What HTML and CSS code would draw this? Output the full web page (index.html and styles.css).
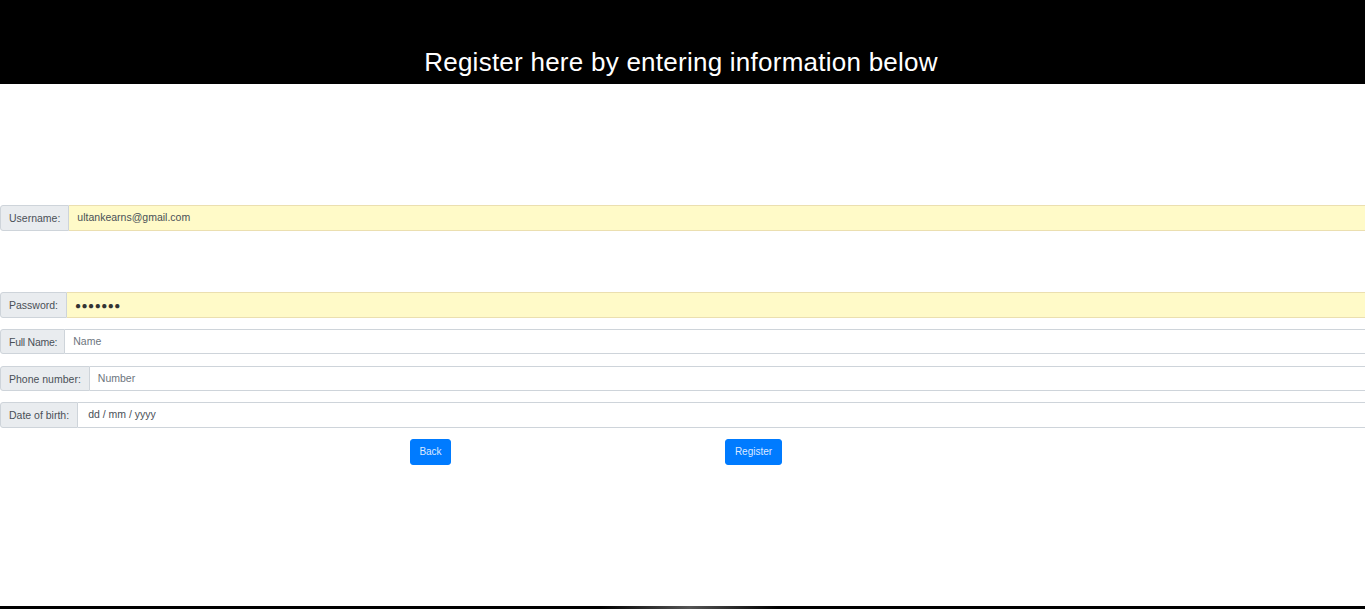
FILE: index.html
```html
<!DOCTYPE html>
<html>
<head>
<meta charset="utf-8">
<link rel="stylesheet" href="styles.css">
</head>
<body>
<div class="page">
  <header class="top">
    <h1 class="title">Register here by entering information below</h1>
  </header>
  <main class="form">
    <div class="group group-user">
      <span class="label">Username:</span>
      <span class="field autofill">ultankearns@gmail.com</span>
    </div>
    <div class="group">
      <span class="label">Password:</span>
      <span class="field autofill dots">&#9679;&#9679;&#9679;&#9679;&#9679;&#9679;&#9679;</span>
    </div>
    <div class="group group-name">
      <span class="label label-tight">Full Name:</span>
      <span class="field placeholder">Name</span>
    </div>
    <div class="group group-phone">
      <span class="label">Phone number:</span>
      <span class="field placeholder">Number</span>
    </div>
    <div class="group">
      <span class="label">Date of birth:</span>
      <span class="field date">dd / mm / yyyy</span>
    </div>
    <div class="buttons">
      <button class="btn btn-back">Back</button>
      <button class="btn btn-reg">Register</button>
    </div>
  </main>
  <footer class="bottom"></footer>
</div>
</body>
</html>
```

FILE: styles.css
```css
html, body {
  margin: 0;
  padding: 0;
  background: #fff;
  overflow: hidden;
}
.page {
  width: 1365px;
  height: 609px;
  display: flex;
  flex-direction: column;
  font-family: "Liberation Sans", Arial, sans-serif;
}
.top {
  background: #000;
  height: 84px;
  box-sizing: border-box;
  padding-top: 46px;
  display: flex;
  justify-content: center;
}
.title {
  margin: 0;
  color: #fff;
  font-weight: normal;
  font-size: 26px;
  line-height: 32px;
  letter-spacing: 0.25px;
  padding-right: 3px;
}
.form {
  padding-top: 121px;
  display: flex;
  flex-direction: column;
}
.group {
  display: flex;
  height: 26px;
  margin-bottom: 11px;
  width: 1380px;
}
.group-user {
  margin-bottom: 61px;
}
.group-name {
  height: 25px;
  margin-bottom: 12px;
}
.group-phone {
  height: 25px;
}
.label {
  background: #e9ecef;
  border: 1px solid #ced4da;
  border-radius: 3px 0 0 3px;
  box-sizing: border-box;
  padding: 0 8px;
  display: flex;
  align-items: center;
  font-size: 10.5px;
  color: #495057;
  white-space: nowrap;
}
.label-tight {
  letter-spacing: -0.25px;
  padding-right: 7px;
}
.field {
  flex: 1;
  box-sizing: border-box;
  border: 1px solid #ced4da;
  border-left: none;
  padding: 0 8px;
  display: flex;
  align-items: center;
  font-size: 10.5px;
  color: #495057;
  padding-bottom: 2px;
}
.autofill {
  background: #fffac8;
  border-color: #ebdfb0;
}
.dots {
  font-size: 10px;
  letter-spacing: 0.5px;
  color: #333;
  padding-bottom: 0;
}
.placeholder {
  color: #6c757d;
}
.date {
  padding-left: 10px;
  color: #495057;
}
.buttons {
  display: flex;
  padding-left: 410px;
}
.btn {
  background: #007bff;
  border: 1px solid #007bff;
  border-radius: 3px;
  color: #dde9ff;
  font-family: "Liberation Sans", Arial, sans-serif;
  font-size: 10px;
  height: 26px;
  padding: 0 8px 2px;
  margin: 0;
}
.btn-back {
  width: 41px;
}
.btn-reg {
  width: 57px;
  margin-left: 274px;
}
.bottom {
  margin-top: auto;
  height: 3px;
  background: linear-gradient(to right, #000 0%, #000 44%, #555 50.5%, #000 57%, #000 100%);
}
```
